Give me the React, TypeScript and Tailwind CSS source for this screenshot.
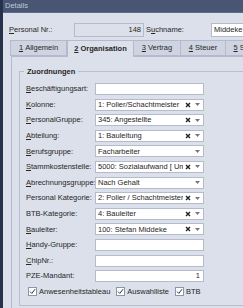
import React from "react";

type Row = {
  label: string;
  u?: number;
  value?: string;
  clear?: boolean;
  drop?: boolean;
  right?: boolean;
};

const rows: Row[] = [
  { label: "Beschäftigungsart:", u: 0 },
  { label: "Kolonne:", u: 0, value: "1: Polier/Schachtmeister", clear: true, drop: true },
  { label: "PersonalGruppe:", u: 0, value: "345: Angestellte", clear: true, drop: true },
  { label: "Abteilung:", u: 0, value: "1: Bauleitung", clear: true, drop: true },
  { label: "Berufsgruppe:", u: 0, value: "Facharbeiter", drop: true },
  { label: "Stammkostenstelle:", u: 0, value: "5000: Sozialaufwand [ Umlage ]", clear: true, drop: true },
  { label: "Abrechnungsgruppe:", u: 0, value: "Nach Gehalt", drop: true },
  { label: "Personal Kategorie:", value: "2: Polier / Schachtmeister", clear: true, drop: true },
  { label: "BTB-Kategorie:", value: "4: Bauleiter", clear: true, drop: true },
  { label: "Bauleiter:", u: 0, value: "100: Stefan Middeke", clear: true, drop: true },
  { label: "Handy-Gruppe:", u: 0 },
  { label: "ChipNr.:", u: 0 },
  { label: "PZE-Mandant:", value: "1", right: true },
];

const Mn = ({ text, u }: { text: string; u?: number }) => {
  if (u === undefined) return <>{text}</>;
  return (
    <>
      {text.slice(0, u)}
      <span className="underline underline-offset-1">{text[u]}</span>
      {text.slice(u + 1)}
    </>
  );
};

const Check = ({ label }: { label: string }) => (
  <div className="flex items-center gap-[2px]">
    <div className="w-[9px] h-[9px] bg-white border border-[#8d95a8] flex items-center justify-center">
      <svg width="7" height="7" viewBox="0 0 7 7">
        <path d="M1 3.6 L2.8 5.4 L6 1.2" fill="none" stroke="#2a3550" strokeWidth="1" />
      </svg>
    </div>
    <span>{label}</span>
  </div>
);

const tabs = ["Allgemein", "Organisation", "Vertrag", "Steuer", "Sozialvers."];

export default function App() {
  return (
    <div
      className="w-[243px] h-[308px] overflow-hidden bg-[#dbe0eb] flex text-[#262626] text-[7.5px] leading-none"
      style={{ fontFamily: "'Liberation Sans', Arial, sans-serif" }}
    >
      <div className="w-[3px] shrink-0 bg-[#27314a]" />
      <div className="flex-1 flex flex-col min-w-0">
        <div className="h-[13px] shrink-0 bg-[#485674] text-[#bfc8da] flex items-center pl-[2px] border-b border-[#5f6c88]">
          Details
        </div>
        <div className="flex items-center h-[14px] mt-[10px] pl-[6px] shrink-0 w-[300px]">
          <span className="w-[65px] shrink-0">
            <Mn text="Personal Nr.:" u={0} />
          </span>
          <div className="w-[70px] h-[14px] shrink-0 border border-[#b4bbca] bg-[#dce0ea] flex items-center justify-end pr-[2px]">
            148
          </div>
          <span className="ml-[2px] w-[65px] shrink-0">
            S<span className="underline underline-offset-1">u</span>chname:
          </span>
          <div className="w-[80px] h-[14px] shrink-0 border border-[#b4bbca] bg-white flex items-center pl-[2px]">
            Middeke
          </div>
        </div>
        <div className="flex mt-[3px] pl-[8px] h-[16px] shrink-0 w-[320px]">
          {tabs.map((t, i) => {
            const active = i === 1;
            const w = [57, 67, 48, 46, 60][i];
            return (
              <div
                key={t}
                style={{ width: w }}
                className={
                  active
                    ? "shrink-0 bg-[#dbe0eb] border border-b-0 border-[#b3bacb] flex items-center justify-center font-bold relative z-10 -mb-px"
                    : "shrink-0 bg-[#ced4e1] border border-[#b3bacb] -ml-px flex items-center justify-center"
                }
              >
                <span className="underline underline-offset-1">{i + 1}</span>&nbsp;{t}
              </div>
            );
          })}
        </div>
        <div className="ml-[8px] border-l border-t border-[#b3bacb] flex-1 w-[300px] pl-[7px] pt-[14px]">
          <div className="relative border border-[#b8bfce] h-[235px] pt-[11px] pl-[6px]">
            <div className="absolute -top-[4px] left-[4px] px-[3px] bg-[#dbe0eb] font-bold text-[7.5px]">
              Zuordnungen
            </div>
            <div className="flex flex-col gap-[3.6px]">
              {rows.map((r) => (
                <div key={r.label} className="flex items-center h-[12px]">
                  <span className="w-[69px] shrink-0 whitespace-nowrap">
                    <Mn text={r.label} u={r.u} />
                  </span>
                  <div className="w-[109px] h-[12px] shrink-0 border border-[#b4bbca] bg-white flex items-center pl-[2px] pr-[3px] overflow-hidden">
                    <span className={"flex-1 whitespace-nowrap overflow-hidden " + (r.right ? "text-right" : "")}>
                      {r.value}
                    </span>
                    {r.clear && (
                      <svg width="6" height="6" viewBox="0 0 6 6" className="shrink-0 ml-[2px]">
                        <path d="M1 1 L5 5 M5 1 L1 5" stroke="#222" strokeWidth="1.4" />
                      </svg>
                    )}
                    {r.drop && (
                      <svg width="5" height="3" viewBox="0 0 5 3" className="shrink-0 ml-[4px]">
                        <path d="M0 0 H5 L2.5 3 Z" fill="#777" />
                      </svg>
                    )}
                  </div>
                </div>
              ))}
              <div className="flex items-center gap-[6px] pl-[2px] h-[12px]">
                <Check label="Anwesenheitstableau" />
                <Check label="Auswahlliste" />
                <Check label="BTB" />
              </div>
            </div>
          </div>
        </div>
      </div>
    </div>
  );
}
